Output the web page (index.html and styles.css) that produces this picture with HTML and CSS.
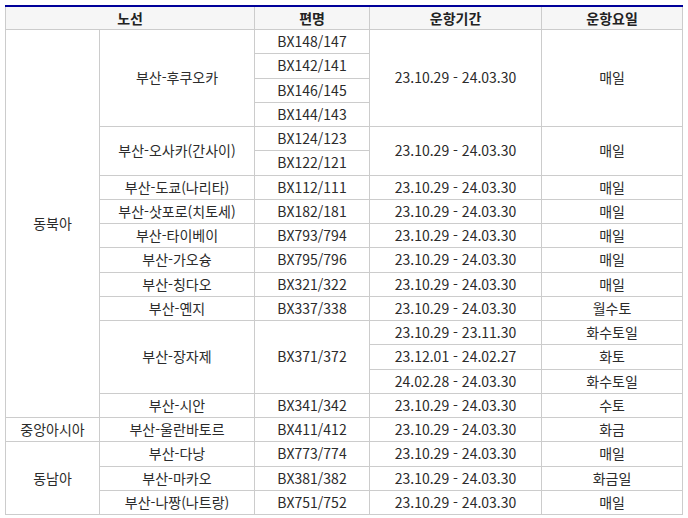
FILE: index.html
```html
<!DOCTYPE html>
<html lang="ko">
<head>
<meta charset="utf-8">
<link rel="stylesheet" href="styles.css">
</head>
<body>
<div class="wrap">
<table class="sched">
<colgroup>
<col class="c1"><col class="c2"><col class="c3"><col class="c4"><col class="c5">
</colgroup>
<thead>
<tr><th colspan="2">노선</th><th>편명</th><th>운항기간</th><th>운항요일</th></tr>
</thead>
<tbody>
<tr><td rowspan="16">동북아</td><td rowspan="4">부산-후쿠오카</td><td>BX148/147</td><td rowspan="4">23.10.29 - 24.03.30</td><td rowspan="4">매일</td></tr>
<tr><td>BX142/141</td></tr>
<tr><td>BX146/145</td></tr>
<tr><td>BX144/143</td></tr>
<tr><td rowspan="2">부산-오사카(간사이)</td><td>BX124/123</td><td rowspan="2">23.10.29 - 24.03.30</td><td rowspan="2">매일</td></tr>
<tr><td>BX122/121</td></tr>
<tr><td>부산-도쿄(나리타)</td><td>BX112/111</td><td>23.10.29 - 24.03.30</td><td>매일</td></tr>
<tr><td>부산-삿포로(치토세)</td><td>BX182/181</td><td>23.10.29 - 24.03.30</td><td>매일</td></tr>
<tr><td>부산-타이베이</td><td>BX793/794</td><td>23.10.29 - 24.03.30</td><td>매일</td></tr>
<tr><td>부산-가오슝</td><td>BX795/796</td><td>23.10.29 - 24.03.30</td><td>매일</td></tr>
<tr><td>부산-칭다오</td><td>BX321/322</td><td>23.10.29 - 24.03.30</td><td>매일</td></tr>
<tr><td>부산-옌지</td><td>BX337/338</td><td>23.10.29 - 24.03.30</td><td>월수토</td></tr>
<tr><td rowspan="3">부산-장자제</td><td rowspan="3">BX371/372</td><td>23.10.29 - 23.11.30</td><td>화수토일</td></tr>
<tr><td>23.12.01 - 24.02.27</td><td>화토</td></tr>
<tr><td>24.02.28 - 24.03.30</td><td>화수토일</td></tr>
<tr><td>부산-시안</td><td>BX341/342</td><td>23.10.29 - 24.03.30</td><td>수토</td></tr>
<tr><td>중앙아시아</td><td>부산-울란바토르</td><td>BX411/412</td><td>23.10.29 - 24.03.30</td><td>화금</td></tr>
<tr><td rowspan="3">동남아</td><td>부산-다낭</td><td>BX773/774</td><td>23.10.29 - 24.03.30</td><td>매일</td></tr>
<tr><td>부산-마카오</td><td>BX381/382</td><td>23.10.29 - 24.03.30</td><td>화금일</td></tr>
<tr><td>부산-나짱(나트랑)</td><td>BX751/752</td><td>23.10.29 - 24.03.30</td><td>매일</td></tr>
</tbody>
</table>
</div>
</body>
</html>
```

FILE: styles.css
```css
html, body {
  margin: 0;
  padding: 0;
  background: #fff;
}
.wrap {
  padding: 5px 0 0 5px;
}
.sched {
  width: 677px;
  border-collapse: collapse;
  table-layout: fixed;
  font-family: "Noto Sans CJK KR", "Noto Sans", sans-serif;
  font-size: 14px;
  color: #2b2b2b;
}
.c1 { width: 94px; }
.c2 { width: 155px; }
.c3 { width: 115px; }
.c4 { width: 172px; }
.c5 { width: 141px; }
.sched th,
.sched td {
  border: 1px solid #cccccc;
  text-align: center;
  vertical-align: middle;
  padding: 2px 0;
  line-height: 19.25px;
  white-space: nowrap;
}
.sched thead th {
  border-top: 2px solid #000099;
  background: #f6f6f6;
  font-weight: bold;
  color: #222;
  height: 18px;
  line-height: 18px;
}
```
